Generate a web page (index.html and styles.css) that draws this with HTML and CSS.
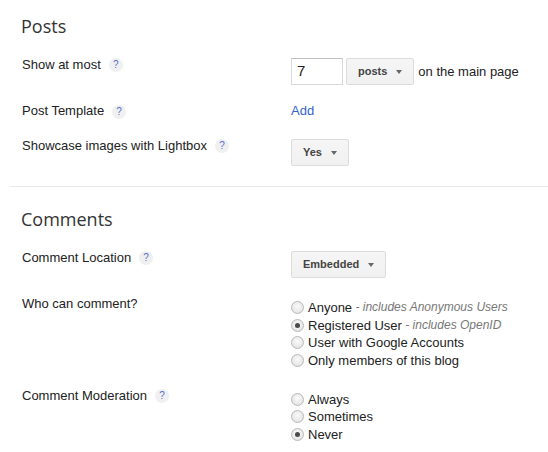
FILE: index.html
```html
<!DOCTYPE html>
<html>
<head>
<meta charset="utf-8">
<link rel="stylesheet" href="styles.css">
</head>
<body>
<div class="page">
  <section class="sec">
    <h2 class="title">Posts</h2>
    <div class="row">
      <div class="lbl">Show at most<span class="help">?</span></div>
      <div class="ctl inline">
        <span class="num">7</span>
        <span class="btn">posts<span class="arrow"></span></span>
        <span class="after">on the main page</span>
      </div>
    </div>
    <div class="row">
      <div class="lbl">Post Template<span class="help">?</span></div>
      <div class="ctl text"><a class="link">Add</a></div>
    </div>
    <div class="row last">
      <div class="lbl">Showcase images with Lightbox<span class="help">?</span></div>
      <div class="ctl inline"><span class="btn">Yes<span class="arrow"></span></span></div>
    </div>
  </section>
  <div class="divider"></div>
  <section class="sec">
    <h2 class="title">Comments</h2>
    <div class="row">
      <div class="lbl">Comment Location<span class="help">?</span></div>
      <div class="ctl inline"><span class="btn">Embedded<span class="arrow"></span></span></div>
    </div>
    <div class="row">
      <div class="lbl">Who can comment?</div>
      <div class="ctl radios">
        <div class="opt"><span class="radio"></span>Anyone<span class="hint"> - includes Anonymous Users</span></div>
        <div class="opt"><span class="radio on"></span>Registered User<span class="hint"> - includes OpenID</span></div>
        <div class="opt"><span class="radio"></span>User with Google Accounts</div>
        <div class="opt"><span class="radio"></span>Only members of this blog</div>
      </div>
    </div>
    <div class="row">
      <div class="lbl">Comment Moderation<span class="help">?</span></div>
      <div class="ctl radios">
        <div class="opt"><span class="radio"></span>Always</div>
        <div class="opt"><span class="radio"></span>Sometimes</div>
        <div class="opt"><span class="radio on"></span>Never</div>
      </div>
    </div>
  </section>
</div>
</body>
</html>
```
FILE: styles.css
```css
html, body {
  margin: 0;
  padding: 0;
  background: #ffffff;
}
body {
  font-family: "Liberation Sans", Arial, sans-serif;
  font-size: 13px;
  line-height: 16px;
  color: #222222;
}
.page {
  padding-top: 14px;
}
.sec {
  padding-left: 22px;
}
.title {
  margin: 0 0 18.5px -1px;
  font-family: "Open Sans", "Liberation Sans", sans-serif;
  font-weight: 400;
  font-size: 18px;
  line-height: 24px;
  color: #333333;
}
.row {
  display: grid;
  grid-template-columns: 269px 1fr;
  align-items: start;
  margin-bottom: 18.5px;
}
.row.last {
  margin-bottom: 0;
}
.lbl {
  display: flex;
  align-items: center;
  white-space: nowrap;
}
.help {
  display: inline-flex;
  align-items: center;
  justify-content: center;
  width: 14px;
  height: 14px;
  margin-left: 8px;
  margin-top: 1px;
  border-radius: 50%;
  background: #f0f0f0;
  color: #5470cf;
  font-size: 10px;
  line-height: 14px;
}
.ctl.inline {
  display: flex;
  align-items: center;
  margin-top: 1px;
}
.num {
  box-sizing: border-box;
  width: 52px;
  height: 27px;
  border: 1px solid #d9d9d9;
  border-top-color: #c0c0c0;
  padding-left: 5px;
  font-size: 15px;
  line-height: 24px;
  color: #222222;
  margin-right: 3px;
}
.btn {
  box-sizing: border-box;
  display: inline-flex;
  align-items: center;
  height: 27px;
  padding: 0 11px;
  border: 1px solid #dcdcdc;
  border-radius: 2px;
  background: linear-gradient(#f5f5f5, #f1f1f1);
  font-weight: 700;
  font-size: 11px;
  color: #444444;
}
.arrow {
  width: 0;
  height: 0;
  margin-left: 9px;
  margin-top: 1px;
  border-top: 4px solid #666666;
  border-left: 3px solid transparent;
  border-right: 3px solid transparent;
}
.after {
  margin-left: 4px;
  margin-top: 1px;
}
.link {
  color: #3462d2;
  cursor: pointer;
}
.divider {
  height: 1px;
  background: #e8e8e8;
  margin: 20.5px 0 20px 10px;
}
.radios {
  margin-top: 3px;
}
.opt {
  display: flex;
  align-items: center;
  line-height: 17.5px;
  height: 17.5px;
  white-space: nowrap;
}
.radio {
  box-sizing: border-box;
  width: 13px;
  height: 13px;
  border-radius: 50%;
  border: 1px solid #b9b9b9;
  background: radial-gradient(circle at 50% 40%, #fafafa 0%, #e6e6e6 70%, #d8d8d8 100%);
  margin-right: 4px;
  display: inline-flex;
  align-items: center;
  justify-content: center;
}
.radio.on::after {
  content: "";
  width: 5px;
  height: 5px;
  border-radius: 50%;
  background: #4a4a4a;
}
.hint {
  font-style: italic;
  font-size: 12px;
  color: #777777;
  white-space: pre;
}
```
